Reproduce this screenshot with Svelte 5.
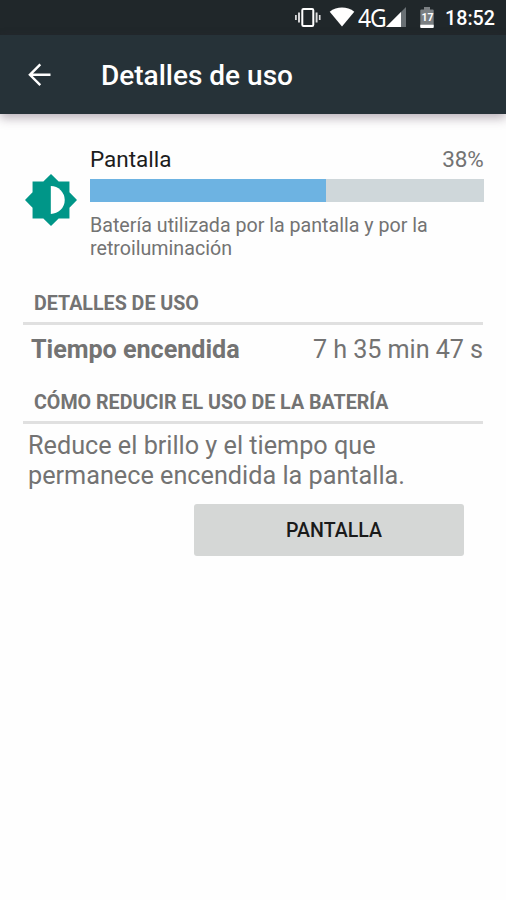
<script>
  const share = 60;
</script>

<div class="screen">
  <div class="status">
    <svg class="vibrate" width="28" height="22" viewBox="0 0 28 22" fill="none" stroke="#fff">
      <rect x="8.3" y="2.1" width="11" height="16.8" rx="1.2" stroke-width="2" />
      <path d="M5 5.5v10M22.6 5.5v10" stroke-width="1.9" opacity=".85" />
      <path d="M1.9 8v5M25.7 8v5" stroke-width="1.7" opacity=".85" />
    </svg>
    <svg class="wifi" width="26" height="20" viewBox="0 0 26 20"><path d="M.7 4.7C7.8-.9 18.2-.9 25.3 4.7L13 19.6z" fill="#fff" /></svg>
    <span class="net">4G</span>
    <svg class="signal" width="20" height="20" viewBox="0 0 20 20">
      <path d="M0 20L20 0v20z" fill="#697074" />
      <path d="M0 20L15 5V20z" fill="#fff" />
    </svg>
    <div class="battery">
      <svg width="14" height="21" viewBox="0 0 14 21">
        <path d="M4 0h6v2.5h2.7q1 0 1 1V20q0 1-1 1H1.3q-1 0-1-1V3.5q0-1 1-1H4z" fill="#7b8083" />
        <path d="M.3 17.8h13.4V20q0 1-1 1H1.3q-1 0-1-1z" fill="#fff" />
      </svg>
      <span>17</span>
    </div>
    <time>18:52</time>
  </div>

  <header>
    <svg width="24" height="24" viewBox="0 0 24 24" fill="none" stroke="#fff" stroke-width="2.4"><path d="M13.3 1.4L2.9 11.8l10.4 10.4M2.9 11.8h20.6" /></svg>
    <h1>Detalles de uso</h1>
  </header>

  <main>
    <section class="entry">
      <svg class="sun" width="52" height="52" viewBox="0 0 53 53">
        <path d="M26.5 0L34.3 7.7H45.3V18.7L53 26.5L45.3 34.3V45.3H34.3L26.5 53L18.7 45.3H7.7V34.3L0 26.5L7.7 18.7V7.7H18.7z" fill="#009688" />
        <path d="M26.3 12.3a14.2 14.2 0 0 1 0 28.4z" fill="#fff" />
      </svg>
      <div class="info">
        <div class="name"><span>Pantalla</span><span class="percent">38%</span></div>
        <div class="bar"><div class="fill" style="width: {share}%"></div></div>
        <p>Batería utilizada por la pantalla y por la<br />retroiluminación</p>
      </div>
    </section>

    <h2>DETALLES DE USO</h2>
    <div class="time"><b>Tiempo encendida</b><span>7 h 35 min 47 s</span></div>

    <h2>CÓMO REDUCIR EL USO DE LA BATERÍA</h2>
    <p class="tip">Reduce el brillo y el tiempo que<br />permanece encendida la pantalla.</p>
    <button>PANTALLA</button>
  </main>
</div>

<style>
  .screen {
    width: 506px;
    height: 900px;
    overflow: hidden;
    background: #fefefe;
    color: #737373;
    font-family: Roboto, sans-serif;
    white-space: nowrap;
  }
  h1, h2, p { margin: 0; }
  svg { display: block; flex: none; }
  .status {
    height: 35px;
    box-sizing: border-box;
    padding: 0 11px 0 294px;
    background: #20272a;
    color: #fff;
    display: flex;
    align-items: flex-start;
  }
  .vibrate { margin-top: 7px; }
  .wifi { margin: 7px 0 0 6.6px; }
  .net {
    margin: 4px 0 0 3.4px;
    width: 28px;
    font: 25px/26px "Noto Sans", sans-serif;
    transform: scaleX(0.92);
    transform-origin: left;
    letter-spacing: -1.2px;
  }
  .signal { margin: 7px 0 0 0.5px; }
  .battery {
    position: relative;
    margin: 7px 0 0 14px;
  }
  .battery span {
    position: absolute;
    inset: 4px 0 auto;
    font: 700 10.5px/13px Roboto, sans-serif;
    text-align: center;
  }
  time {
    margin-left: auto;
    font-size: 19.7px;
    font-weight: 500;
    line-height: 38px;
  }
  header {
    position: relative;
    height: 79px;
    box-sizing: border-box;
    padding: 0 0 0 27px;
    background: #263238;
    box-shadow: 0 4px 10px rgba(60, 40, 60, 0.36);
    color: #fff;
    display: flex;
    align-items: center;
  }
  h1 {
    margin: 2px 0 0 50px;
    font-size: 28px;
    font-weight: 500;
    line-height: 32px;
  }
  main {
    padding: 32px 23px 0;
    display: flex;
    flex-direction: column;
  }
  .entry {
    display: flex;
    height: 145px;
  }
  .sun { margin: 28px 12px 0 2px; }
  .info { width: 393.5px; margin-left: 1px; flex: none; }
  .name {
    display: flex;
    justify-content: space-between;
    color: #1c1c1c;
    font-size: 22.5px;
    line-height: 27px;
  }
  .percent { color: #737373; letter-spacing: -0.2px; }
  .bar {
    height: 22.5px;
    margin-top: 6.4px;
    background: #cfd7da;
  }
  .fill { height: 100%; background: #6db3e2; }
  .info p {
    margin-top: 12.1px;
    font-size: 19.65px;
    line-height: 23px;
  }
  h2 {
    height: 34px;
    box-sizing: border-box;
    padding-left: 11px;
    border-bottom: 3px solid #e0e0e0;
    font-size: 19.65px;
    font-weight: 700;
    line-height: 26px;
  }
  .time {
    display: flex;
    justify-content: space-between;
    height: 65px;
    box-sizing: border-box;
    padding: 9px 0 0 8px;
    font-size: 25.2px;
    line-height: 31px;
  }
  .time b { letter-spacing: -0.05px; }
  .time span { letter-spacing: -0.06px; }
  .tip {
    padding: 7px 0 0 5px;
    font-size: 25.22px;
    line-height: 29.5px;
  }
  button {
    width: 270px;
    height: 52px;
    margin: 14px 19px 0 auto;
    padding: 2px 0 0 10px;
    border: 0;
    border-radius: 3px;
    background: #d5d7d6;
    color: #1a1a1a;
    font: 500 19.6px/50px Roboto, sans-serif;
  }
</style>
